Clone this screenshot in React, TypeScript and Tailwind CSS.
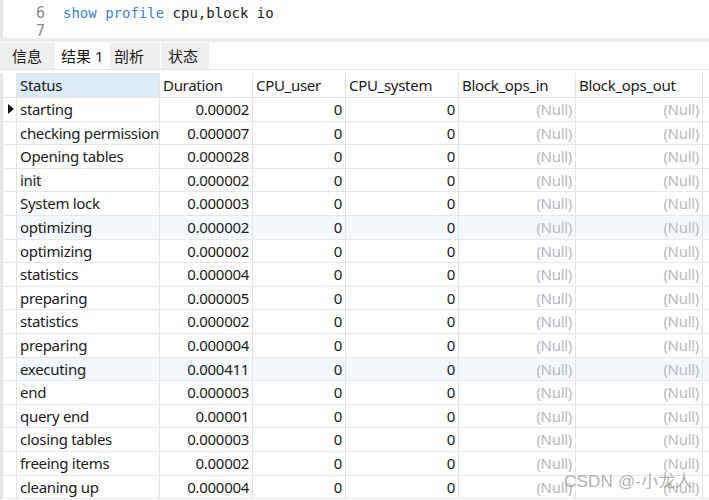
import React from "react";

const rows: [string, string][] = [
  ["starting", "0.00002"],
  ["checking permission", "0.000007"],
  ["Opening tables", "0.000028"],
  ["init", "0.000002"],
  ["System lock", "0.000003"],
  ["optimizing", "0.000002"],
  ["optimizing", "0.000002"],
  ["statistics", "0.000004"],
  ["preparing", "0.000005"],
  ["statistics", "0.000002"],
  ["preparing", "0.000004"],
  ["executing", "0.000411"],
  ["end", "0.000003"],
  ["query end", "0.00001"],
  ["closing tables", "0.000003"],
  ["freeing items", "0.00002"],
  ["cleaning up", "0.000004"],
];

const font = { fontFamily: '"Noto Sans", "Noto Sans CJK SC", sans-serif' };

export default function App() {
  return (
    <div className="w-[709px] h-[500px] overflow-hidden bg-white relative text-[#1a1a1a]" style={font}>
      {/* editor */}
      <div className="h-[38px] flex border-l-[3px] border-[#e6e6e6]">
        <div className="w-[42px] flex flex-col items-end pt-[4px] text-[15px] leading-[18px] text-[#8a8a8a]" style={{ fontFamily: '"DejaVu Sans Mono", monospace' }}>
          <div>6</div>
          <div>7</div>
        </div>
        <div className="pl-[18px] pt-[4px] text-[14px] leading-[18px]" style={{ fontFamily: '"DejaVu Sans Mono", monospace' }}>
          <span className="text-[#3b82d6]">show profile</span> cpu,block io
        </div>
      </div>
      <div className="h-[4px] bg-[#ececec]" />
      {/* tabs */}
      <div className="h-[27px] mt-[1px] flex items-stretch text-[15px] border-b border-[#e3e3e3]">
        <div className="w-[55px] bg-[#efefef] flex items-center pl-[12px]">信息</div>
        <div className="w-[55px] bg-white flex items-center pl-[6px]">结果 1</div>
        <div className="w-[50px] bg-[#efefef] flex items-center pl-[4px]">剖析</div>
        <div className="w-[48px] bg-[#efefef] flex items-center pl-[7px] ml-[1px]">状态</div>
      </div>
      {/* table */}
      <div className="mt-[3px] border-l-[3px] border-[#e6e6e6] text-[15px] tracking-[-0.3px]">
        <div className="flex h-[25px] border-b border-[#e3e3e3]">
          <div className="w-[14px] border-r border-[#e3e3e3]" />
          <div className="w-[143px] bg-[#dcebf8] border-r border-[#e3e3e3] pl-[3px] flex items-center">Status</div>
          <div className="w-[93px] border-r border-[#e3e3e3] pl-[3px] flex items-center">Duration</div>
          <div className="w-[93px] border-r border-[#e3e3e3] pl-[3px] flex items-center">CPU_user</div>
          <div className="w-[113px] border-r border-[#e3e3e3] pl-[3px] flex items-center">CPU_system</div>
          <div className="w-[117px] border-r border-[#e3e3e3] pl-[3px] flex items-center">Block_ops_in</div>
          <div className="w-[127px] border-r border-[#e3e3e3] pl-[3px] flex items-center">Block_ops_out</div>
        </div>
        {rows.map(([s, d], i) => {
          const hl = i === 5 || i === 11;
          return (
            <div key={i} className={`flex h-[23.6px] border-b border-[#e8e8e8] ${hl ? "bg-[#f3f8fd]" : ""}`}>
              <div className="w-[14px] border-r border-[#e3e3e3] bg-white flex items-center pl-[5px]">
                {i === 0 && (
                  <svg width="6" height="10" viewBox="0 0 6 10"><path d="M0 0 L6 5 L0 10 Z" fill="#111" /></svg>
                )}
              </div>
              <div className="w-[143px] border-r border-[#e3e3e3] pl-[3px] flex items-center whitespace-nowrap overflow-hidden">{s}</div>
              <div className="w-[93px] border-r border-[#e3e3e3] pr-[3px] flex items-center justify-end">{d}</div>
              <div className="w-[93px] border-r border-[#e3e3e3] pr-[3px] flex items-center justify-end">0</div>
              <div className="w-[113px] border-r border-[#e3e3e3] pr-[3px] flex items-center justify-end">0</div>
              <div className="w-[117px] border-r border-[#e3e3e3] pr-[3px] flex items-center justify-end text-[#b8b8c2]">(Null)</div>
              <div className="w-[127px] border-r border-[#e3e3e3] pr-[3px] flex items-center justify-end text-[#b8b8c2]">(Null)</div>
            </div>
          );
        })}
      </div>
      <div className="absolute left-[564px] top-[469px] text-[17px] text-[#9a9a9a]/80 tracking-[0.2px] whitespace-nowrap" style={{ fontFamily: '"Liberation Sans", "Noto Sans CJK SC", sans-serif' }}>
        CSDN @-小龙人
      </div>
    </div>
  );
}
